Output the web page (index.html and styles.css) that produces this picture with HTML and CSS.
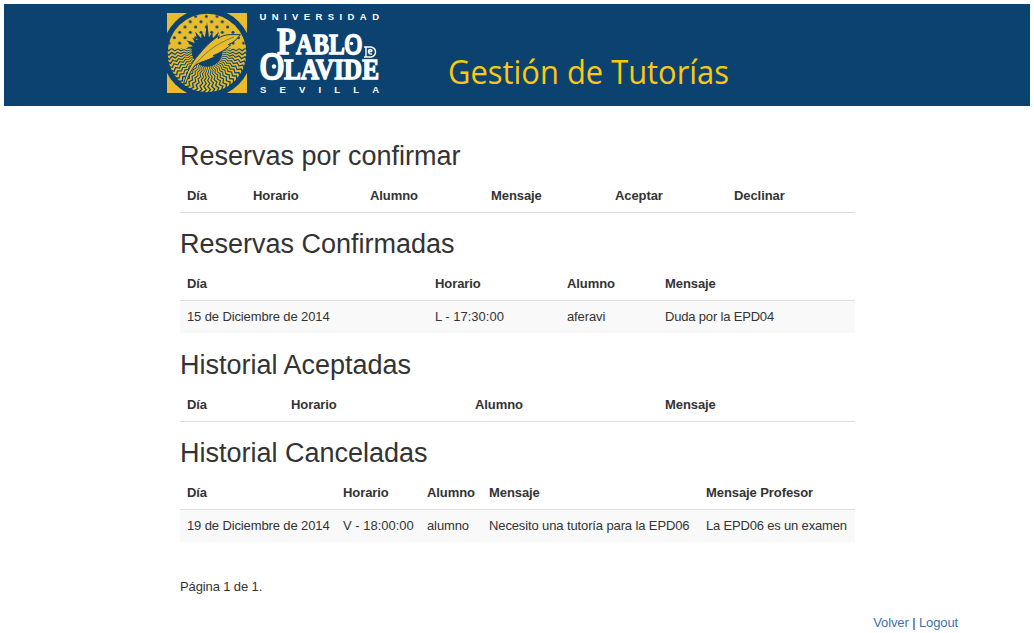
FILE: index.html
```html
<!DOCTYPE html>
<html lang="es">
<head>
<meta charset="utf-8">
<title>Gestión de Tutorías</title>
<link rel="stylesheet" href="styles.css">
</head>
<body>
<header class="banner">
  <svg class="emblem" viewBox="0 0 240 240" aria-hidden="true">
    <defs>
      <pattern id="dots" width="32" height="32" patternUnits="userSpaceOnUse" x="6" y="2">
        <circle cx="16" cy="8" r="4.500" fill="#0c426f"/><circle cx="0" cy="24" r="4.500" fill="#0c426f"/><circle cx="32" cy="24" r="4.500" fill="#0c426f"/>
      </pattern>
      <clipPath id="disc"><circle cx="120" cy="120" r="118"/></clipPath>
    </defs>
    <rect width="240" height="240" fill="#e8bc2c"/>
    <circle cx="120" cy="120" r="134" fill="#0c426f"/>
    <g clip-path="url(#disc)">
      <rect width="240" height="106" fill="#e8bc2c"/>
      <rect width="240" height="100" fill="url(#dots)"/>
      <path id="sun" fill="#0c426f"/>
      <g id="waves" fill="#e8bc2c"></g>
    </g>
    <path d="M50 211C60 177 72 151 96 124C112 104 130 86 149 73L157 68L153 77C173 62 192 65 220 65C211 78 199 89 184 95L191 96C171 113 156 121 138 128L145 130C121 144 99 146 85 157C71 171 63 192 57 210Z" fill="#e8bc2c" stroke="#0c426f" stroke-width="3"/>
    <path d="M78 163C108 124 143 93 201 72" fill="none" stroke="#0c426f" stroke-width="1.500"/>
  </svg>
  <svg class="wordmark" viewBox="0 0 124 90" role="img" aria-label="Universidad Pablo de Olavide Sevilla">
    <g class="wordmark-small">
      <text x="1.500" y="10.500" textLength="119.500">UNIVERSIDAD</text>
      <text x="2" y="83.500" textLength="119">SEVILLA</text>
    </g>
    <g class="wordmark-large">
      <text x="19" y="44.500" textLength="85" lengthAdjust="spacingAndGlyphs"><tspan class="cap">P</tspan>ABL<tspan class="ring">O</tspan></text>
      <text x="2" y="69.500" textLength="119" lengthAdjust="spacingAndGlyphs"><tspan class="cap ring">O</tspan>LAVIDE</text>
    </g>
    <circle cx="16" cy="57.500" r="2.200" fill="#fff"/>
    <circle cx="93.500" cy="34.500" r="1.800" fill="#fff"/>
    <path d="M106 38H113Q117.500 39 117.500 43T113 48H106M108 38V48M114 42.500H110.500Q110.500 40.500 112.300 40.500T114 42.500M110.500 43Q111 45.500 114 45" fill="none" stroke="#fff" stroke-width="1.400"/>
  </svg>
  <svg class="app-title" viewBox="0 0 290 50" role="img" aria-label="Gestión de Tutorías">
    <text x="3" y="33" textLength="281" lengthAdjust="spacingAndGlyphs">Gestión de Tutorías</text>
  </svg>
</header>
<main class="content">
  <section class="block">
    <h2>Reservas por confirmar</h2>
    <table>
      <colgroup><col class="w66"><col class="w117"><col class="w121"><col class="w124"><col class="w119"><col></colgroup>
      <thead><tr><th>Día</th><th>Horario</th><th>Alumno</th><th>Mensaje</th><th>Aceptar</th><th>Declinar</th></tr></thead>
    </table>
  </section>
  <section class="block filled">
    <h2>Reservas Confirmadas</h2>
    <table>
      <colgroup><col class="w248"><col class="w132"><col class="w98"><col></colgroup>
      <thead><tr><th>Día</th><th>Horario</th><th>Alumno</th><th>Mensaje</th></tr></thead>
      <tbody><tr><td>15 de Diciembre de 2014</td><td class="time">L - 17:30:00</td><td>aferavi</td><td>Duda por la EPD04</td></tr></tbody>
    </table>
  </section>
  <section class="block">
    <h2>Historial Aceptadas</h2>
    <table>
      <colgroup><col class="w104"><col class="w184"><col class="w190"><col></colgroup>
      <thead><tr><th>Día</th><th>Horario</th><th>Alumno</th><th>Mensaje</th></tr></thead>
    </table>
  </section>
  <section class="block filled">
    <h2>Historial Canceladas</h2>
    <table>
      <colgroup><col class="w156"><col class="w84"><col class="w62"><col class="w217"><col></colgroup>
      <thead><tr><th>Día</th><th>Horario</th><th>Alumno</th><th>Mensaje</th><th>Mensaje Profesor</th></tr></thead>
      <tbody><tr><td>19 de Diciembre de 2014</td><td class="time">V - 18:00:00</td><td>alumno</td><td>Necesito una tutoría para la EPD06</td><td>La EPD06 es un examen</td></tr></tbody>
    </table>
  </section>
  <p class="pages">Página 1 de 1.</p>
</main>
<footer class="links"><a href="#">Volver</a> | <a href="#">Logout</a></footer>
<script src="emblem.js"></script>
</body>
</html>
```
FILE: styles.css
```css
* { box-sizing: border-box; }
body {
  margin: 0;
  padding: 4px;
  background: #fff;
  color: #333;
  font: 13px/18px "Liberation Sans", Arial, sans-serif;
  letter-spacing: -.12px;
}
.banner {
  display: flex;
  height: 102px;
  padding: 9px 0 0 163px;
  background: #0c426f;
  letter-spacing: 0;
}
.emblem { width: 80px; height: 80px; }
.wordmark { width: 124px; height: 90px; margin: -4px 0 0 11px; overflow: visible; }
.wordmark text { fill: #fff; }
.wordmark-small { font: bold 9.500px "Liberation Sans", Arial, sans-serif; }
.wordmark-large { font: bold 29px "Liberation Serif", serif; }
.wordmark-large text { stroke: #fff; stroke-width: 1.300px; }
.wordmark-large .cap { font-size: 38px; }
.wordmark-large .ring { font-weight: 400; stroke-width: 2.400px; }
.app-title { width: 290px; height: 50px; margin: 38px 0 0 63px; overflow: visible; }
.app-title text { fill: #fdc80f; font: 32px "Open Sans", sans-serif; }
.content { width: 675px; margin-left: 176px; padding-top: 32px; }
.block { padding-bottom: 13px; }
.block.filled { padding-bottom: 14px; }
h2 { margin: 0; height: 42px; padding-top: 3px; font-size: 27px; font-weight: 400; line-height: 31px; letter-spacing: 0; white-space: nowrap; }
table { width: 100%; table-layout: fixed; border-collapse: separate; border-spacing: 0; }
th, td { height: 33px; padding: 7px; line-height: 18px; text-align: left; vertical-align: top; white-space: nowrap; }
th { border-bottom: 1px solid #ddd; letter-spacing: -.08px; }
td { height: 32px; background: #f9f9f9; }
td.time { letter-spacing: 0; }
td:last-child { letter-spacing: -.18px; }
.w62 { width: 62px; } .w66 { width: 66px; } .w84 { width: 84px; } .w98 { width: 98px; }
.w104 { width: 104px; } .w117 { width: 117px; } .w119 { width: 119px; } .w121 { width: 121px; }
.w124 { width: 124px; } .w132 { width: 132px; } .w156 { width: 156px; } .w184 { width: 184px; }
.w190 { width: 190px; } .w217 { width: 217px; } .w248 { width: 248px; }
.pages { margin: 22px 0 0; }
.links { margin-top: 18px; padding-right: 72px; text-align: right; }
.links a { color: #3b73af; text-decoration: none; }
```
FILE: emblem.js
```js
// Sun rays and wavy stripes radiating from the emblem centre.
const point = (cx, cy, r, a) => (cx + r * Math.cos(a)).toFixed(1) + "," + (cy + r * Math.sin(a)).toFixed(1);
const rad = Math.PI / 180;

const sun = [];
for (let i = 0; i < 24; i++) {
  const tip = i % 6 === 0 ? 90 : i % 2 ? 62 : 72;
  sun.push(point(120, 118, 46, (270 + (i - 0.5) * 15) * rad));
  sun.push(point(120, 118, tip, (270 + i * 15) * rad));
}
document.getElementById("sun").setAttribute("d", "M" + sun.join("L") + "Z");

const waves = document.getElementById("waves");
for (let deg = -6; deg <= 188; deg += 6.4) {
  const left = [], right = [];
  for (let k = 0; k <= 18; k++) {
    const r = 46 + k * 4.6;
    const shift = [0, 2, 0, -2][k % 4];
    left.push(point(120, 115, r, (deg - 1.9 + shift) * rad));
    right.unshift(point(120, 115, r, (deg + 1.9 + shift) * rad));
  }
  const stripe = document.createElementNS("http://www.w3.org/2000/svg", "path");
  stripe.setAttribute("d", "M" + left.concat(right).join("L") + "Z");
  waves.appendChild(stripe);
}
```
